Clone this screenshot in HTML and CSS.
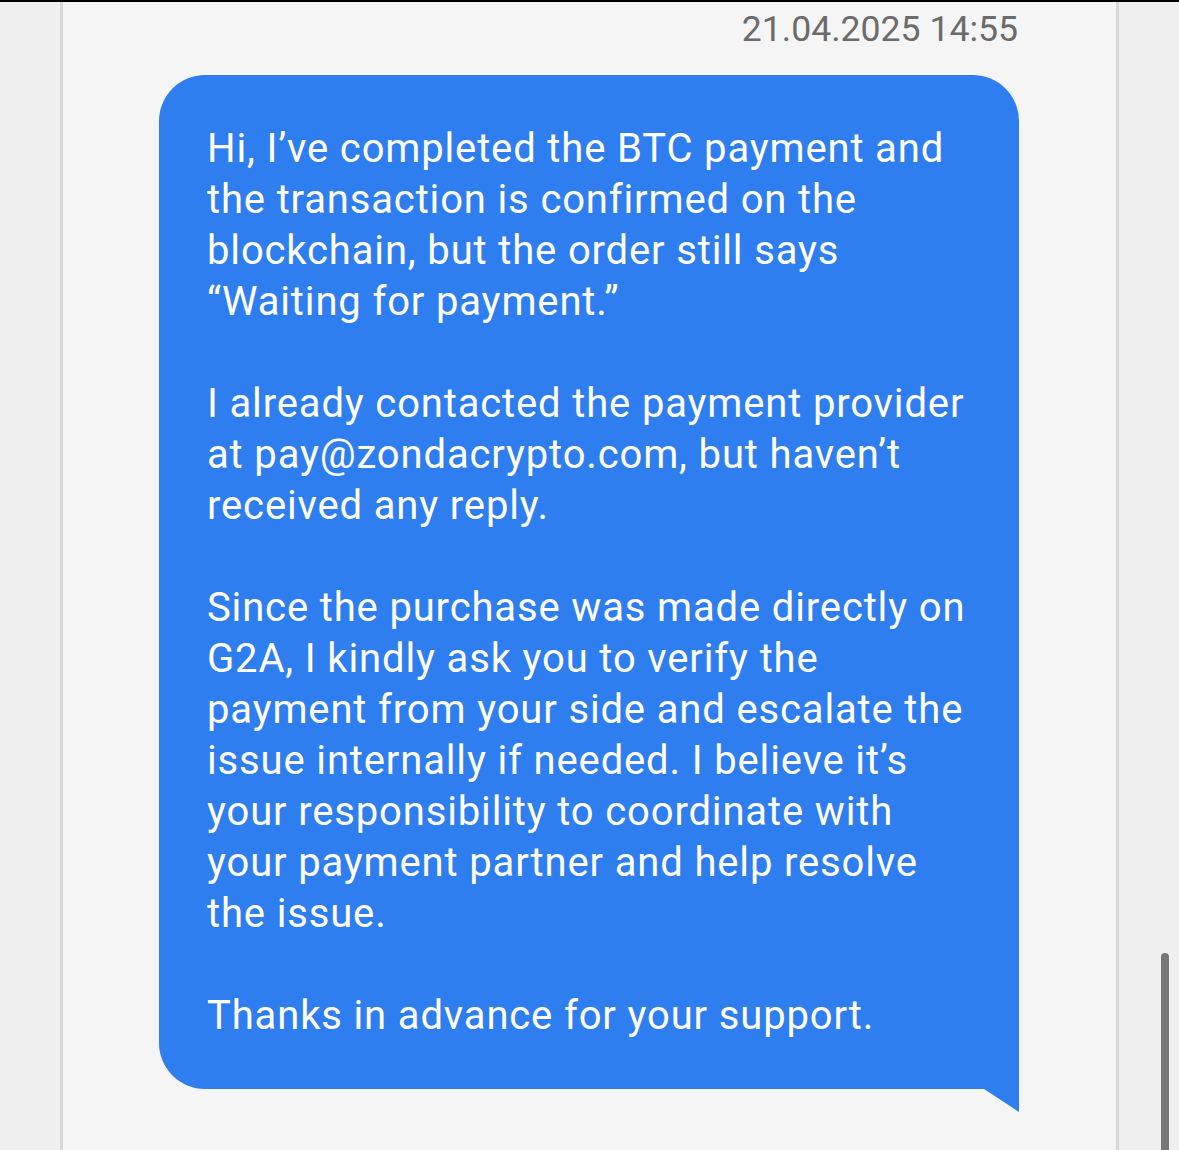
FILE: index.html
```html
<!DOCTYPE html>
<html lang="en">
<head>
<meta charset="utf-8">
<title>Chat</title>
<link rel="stylesheet" href="styles.css">
</head>
<body>
<div class="screen">
  <div class="gutter"></div>
  <main class="panel">
    <div class="timestamp">21.04.2025 14:55</div>
    <div class="bubble">
      <p>Hi, I’ve completed the BTC payment and the transaction is confirmed on the blockchain, but the order still says “Waiting for payment.”</p>
      <p>I already contacted the payment provider at pay@zondacrypto.com, but haven’t received any reply.</p>
      <p>Since the purchase was made directly on G2A, I kindly ask you to verify the payment from your side and escalate the issue internally if needed. I believe it’s your responsibility to coordinate with your payment partner and help resolve the issue.</p>
      <p>Thanks in advance for your support.</p>
    </div>
  </main>
  <div class="gutter gutter-right">
    <div class="scrollbar"></div>
  </div>
</div>
</body>
</html>
```

FILE: styles.css
```css
html, body {
  margin: 0;
  padding: 0;
  height: 1150px;
  overflow: hidden;
  background: #efefef;
  font-family: Roboto, "Noto Sans", sans-serif;
}

.screen {
  display: flex;
  height: 1150px;
  border-top: 2px solid #000;
  box-sizing: border-box;
}

.gutter {
  width: 60px;
  flex: none;
  background: #efefef;
}

.gutter-right {
  position: relative;
}

.scrollbar {
  position: absolute;
  left: 42px;
  top: 951px;
  width: 8px;
  height: 240px;
  border-radius: 4px;
  background: #777;
}

.panel {
  flex: 1;
  background: #f5f5f5;
  border-left: 3px solid #d8d8d8;
  border-right: 3px solid #d8d8d8;
  padding: 6px 97px 0 96px;
  display: flex;
  flex-direction: column;
  align-items: flex-end;
}

.timestamp {
  font-size: 35.6px;
  line-height: 42px;
  color: #6b6b6b;
  padding-right: 1px;
}

.bubble {
  position: relative;
  margin-top: 25px;
  width: 860px;
  box-sizing: border-box;
  padding: 48px 49px 48px 48px;
  background: #2f7ef0;
  color: #fff;
  border-radius: 46px 46px 0 46px;
  font-size: 40px;
  line-height: 51px;
  letter-spacing: 0.85px;
}

.bubble p {
  margin: 0 0 51px;
}

.bubble p:last-child {
  margin-bottom: 0;
}

.bubble::after {
  content: "";
  position: absolute;
  right: 0;
  top: 100%;
  width: 35px;
  height: 23px;
  background: #2f7ef0;
  clip-path: polygon(0 0, 100% 0, 100% 100%);
}
```
